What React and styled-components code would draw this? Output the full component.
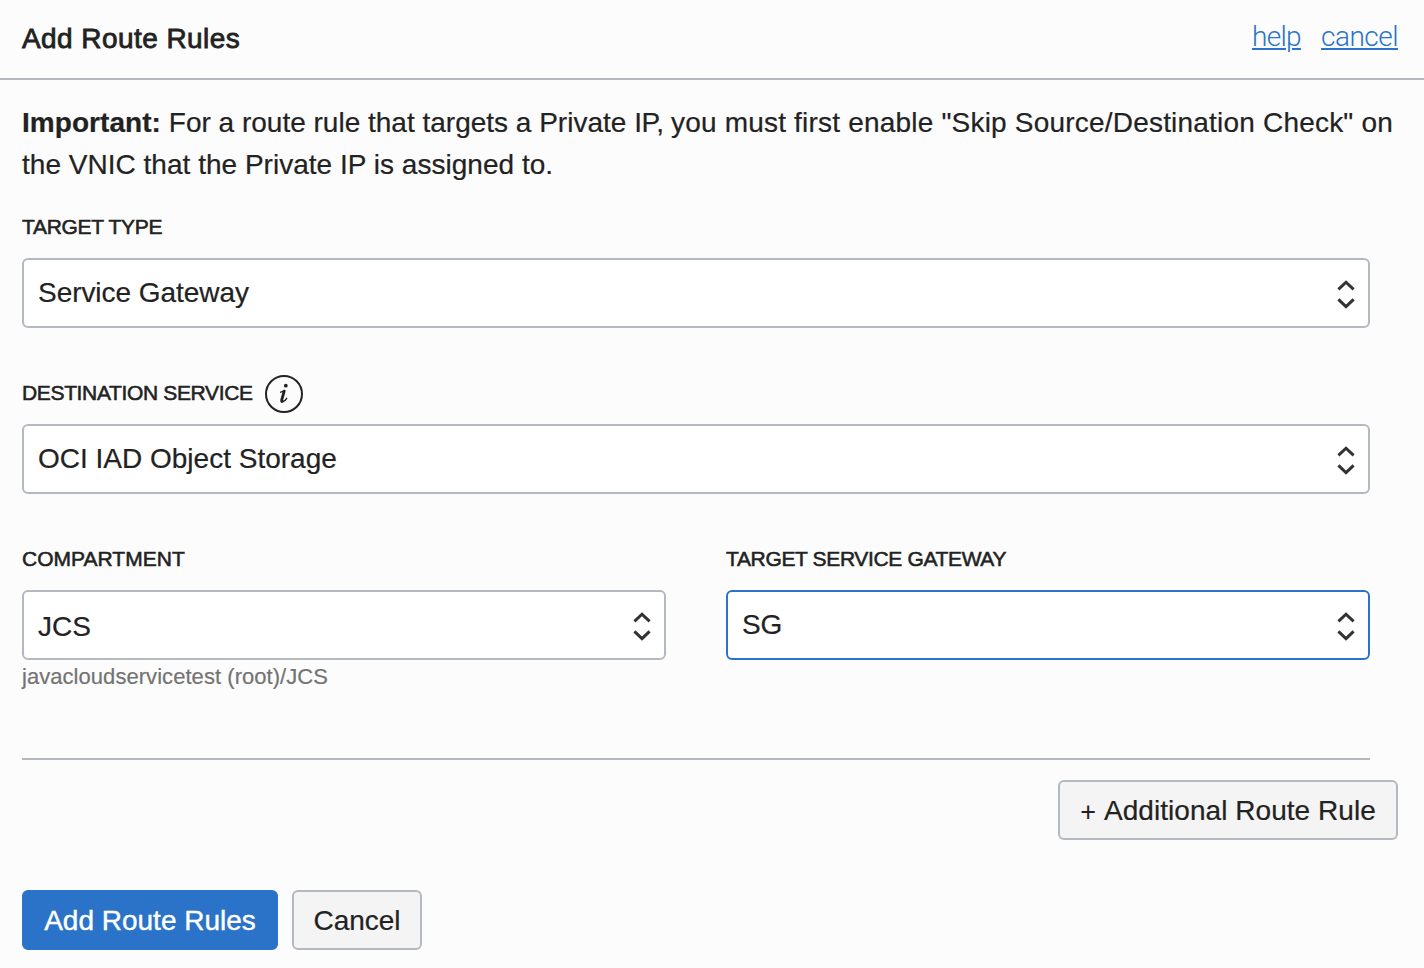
import React from "react";
import styled, { createGlobalStyle } from "styled-components";

const Global = createGlobalStyle`
  *{box-sizing:border-box}
  body{margin:0;background:#fcfcfc;color:#222;font-family:"Liberation Sans",Arial,sans-serif}
`;
const Page = styled.main`width:1424px;height:968px;background:#fcfcfc;overflow:hidden;`;
const Header = styled.header`height:80px;border-bottom:2px solid #b4b9bf;padding:0 26px 2px 22px;display:flex;align-items:center;justify-content:space-between;`;
const Text = styled.span`
  display:inline-block;white-space:pre;
  font-size:${p => p.$size || 28}px;
  letter-spacing:${p => p.$ls || 0}px;
  -webkit-text-stroke:${p => p.$stroke ?? 0.2}px currentColor;
`;
const Title = styled.h1`margin:0;padding-top:1px;font-size:28px;line-height:40px;font-weight:400;`;
const Links = styled.nav`display:flex;gap:20px;padding-bottom:3px;`;
const Link = styled.a`
  color:#2a73c9;font:300 28px/40px Roboto,"Liberation Sans",sans-serif;
  letter-spacing:${p => p.$ls}px;width:${p => p.$w}px;white-space:nowrap;
  text-decoration:underline;text-decoration-thickness:2px;text-underline-offset:2px;
`;
const Body = styled.div`padding:22px 26px 0 22px;`;
const Notice = styled.p`margin:0;font-size:28px;line-height:42px;white-space:nowrap;`;
const NoticeLine = styled.span`display:flex;`;
const Fields = styled.div`width:1348px;display:flex;flex-direction:column;border-bottom:2px solid #b4b9bf;height:574px;`;
const Field = styled.div`width:${p => p.$w || 1348}px;height:166px;`;
const Row = styled.div`display:flex;justify-content:space-between;`;
const Label = styled.div`height:72px;padding:20px 0 10px;display:flex;align-items:center;gap:12px;`;
const InfoIcon = styled.svg`width:38px;height:38px;flex:none;margin-top:1px;`;
const Select = styled.div`
  height:70px;border:2px solid ${p => p.$active ? "#2a73c9" : "#b4b9bf"};border-radius:6px;background:#fff;
  padding:${p => p.$low ? "3px 14px 0" : "0 14px 1px"};
  display:flex;align-items:center;justify-content:space-between;
`;
const ArrowIcon = styled.svg`width:18px;height:30px;flex:none;margin:${p => p.$low ? "0 -1px 1px 0" : "3px -1px 0 0"};`;
const Path = styled.div`font-size:22px;line-height:34px;color:#737373;`;
const Button = styled.button`
  height:60px;width:${p => p.$w}px;border:2px solid ${p => p.$primary ? "#2a73c9" : "#b4b9bf"};border-radius:6px;
  background:${p => p.$primary ? "#2a73c9" : "#f4f4f4"};color:${p => p.$primary ? "#fff" : "#222"};
  font:28px "Liberation Sans",Arial,sans-serif;padding:1px 0 0;
  display:flex;align-items:center;justify-content:center;
`;
const Plus = styled.span`font-size:27px;line-height:32px;padding-top:3px;margin-right:8px;`;
const Extra = styled.div`display:flex;justify-content:flex-end;margin-top:20px;`;
const Actions = styled.div`display:flex;gap:14px;margin-top:50px;`;

const Arrows = ({ low }) => (
  <ArrowIcon $low={low} viewBox="0 0 18 30" fill="none" stroke="#333" strokeWidth="3">
    <path d="M1.4 10.4 9 3.2l7.6 7.2M1.4 20.4 9 27.6l7.6-7.2" />
  </ArrowIcon>
);
const Info = () => (
  <InfoIcon viewBox="0 0 38 38" fill="none" stroke="#222" strokeLinecap="round" strokeLinejoin="round">
    <circle cx="19" cy="19" r="18" strokeWidth="2" />
    <circle cx="20.8" cy="10.7" r="1.9" fill="#222" stroke="none" />
    <path d="M15.7 17.2c1.3-.4 2.2-.9 3.3-1.6" strokeWidth="1.4" />
    <path d="m19.2 16.2-2.5 8.8c-.3 1.2.1 1.6.7 1.4" strokeWidth="2.8" />
    <path d="M17.4 26.8c1.7-.2 3.3-1.7 4.3-3.5" strokeWidth="1.4" />
  </InfoIcon>
);
const LabelText = ({ ls = -0.35, children }) => <Text $size={21} $ls={ls} $stroke={0.55}>{children}</Text>;

export default function App() {
  return (
    <Page>
      <Global />
      <Header>
        <Title><Text $ls={0.43} $stroke={0.8}>Add Route Rules</Text></Title>
        <Links><Link $w={49} $ls={-0.7}>help</Link><Link $w={77} $ls={-0.5}>cancel</Link></Links>
      </Header>
      <Body>
        <Notice>
          <NoticeLine>
            <Text $ls={0.05}><b>Important:</b> </Text>
            <Text>For a route rule that targets a Private </Text>
            <Text $ls={-0.4}>IP, </Text>
            <Text $ls={0.2}>you must first enable "Skip Source/Destination Check" on</Text>
          </NoticeLine>
          <NoticeLine><Text $ls={0.02}>the VNIC that the Private IP is assigned to.</Text></NoticeLine>
        </Notice>
        <Fields>
          <Field>
            <Label><LabelText ls={-0.3}>TARGET TYPE</LabelText></Label>
            <Select><Text $ls={-0.05}>Service Gateway</Text><Arrows /></Select>
          </Field>
          <Field>
            <Label><LabelText>DESTINATION SERVICE</LabelText><Info /></Label>
            <Select><Text>OCI IAD Object Storage</Text><Arrows /></Select>
          </Field>
          <Row>
            <Field $w={644}>
              <Label><LabelText ls={0.02}>COMPARTMENT</LabelText></Label>
              <Select $low><Text>JCS</Text><Arrows low /></Select>
              <Path><Text $size={22} $ls={0.05}>javacloudservicetest (root)/JCS</Text></Path>
            </Field>
            <Field $w={644}>
              <Label><LabelText>TARGET SERVICE GATEWAY</LabelText></Label>
              <Select $active><Text $ls={-0.3}>SG</Text><Arrows /></Select>
            </Field>
          </Row>
        </Fields>
        <Extra><Button $w={340}><Plus>+</Plus><Text $ls={0.05}>Additional Route Rule</Text></Button></Extra>
        <Actions>
          <Button $primary $w={256}><Text $stroke={0.4}>Add Route Rules</Text></Button>
          <Button $w={130}><Text>Cancel</Text></Button>
        </Actions>
      </Body>
    </Page>
  );
}
